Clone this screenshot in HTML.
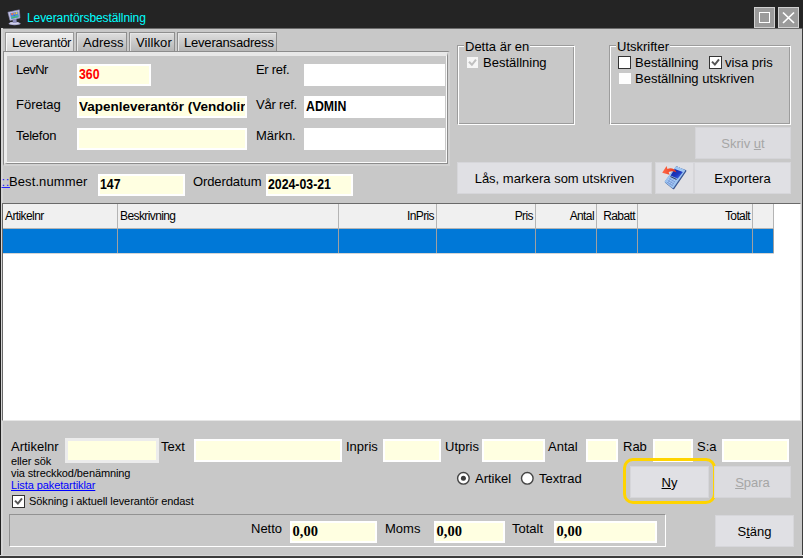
<!DOCTYPE html>
<html>
<head>
<meta charset="utf-8">
<title>Leverantörsbeställning</title>
<style>
html,body{margin:0;padding:0;}
body{width:803px;height:558px;overflow:hidden;background:#c8c8c8;font-family:"Liberation Sans",sans-serif;font-size:13px;color:#000;position:relative;}
.a{position:absolute;white-space:nowrap;}
.lbl{position:absolute;white-space:nowrap;font-size:13px;line-height:15px;color:#000;}
.sm{position:absolute;white-space:nowrap;font-size:11px;line-height:13px;color:#000;letter-spacing:-0.1px;}
.fld{position:absolute;box-sizing:border-box;border:2px solid #fff;background:#ffffe1;font-weight:bold;font-size:13px;letter-spacing:-0.2px;line-height:18px;padding-left:0;overflow:hidden;white-space:nowrap;}
.fld.w{background:#fff;}
.btn{position:absolute;box-sizing:border-box;background:#e0e0e4;border:1px solid #d6d6da;text-align:center;font-size:13px;color:#000;white-space:nowrap;}
.btn.dis{color:#a6a6a6;background:#dcdce0;border-color:#d4d4d8;}
.tab{position:absolute;box-sizing:border-box;top:32px;height:20px;border:1px solid #8e8e8e;font-size:13px;line-height:15px;padding:2px 0 0 6px;text-align:left;white-space:nowrap;overflow:hidden;background:linear-gradient(#dedede,#b6b6b6);box-shadow:inset 1px 1px 0 #e6e6e6;}
.tab.act{background:linear-gradient(#eeeeee,#d6d6d6);border-color:#989898;box-shadow:inset 1px 1px 0 #f6f6f6;}
.grp{position:absolute;box-sizing:border-box;border:1px solid #9c9c9c;}
.grp:after{content:"";position:absolute;left:0;top:0;right:-2px;bottom:-2px;border:1px solid #fff;border-right-color:#fff;}
.sunk{position:absolute;box-sizing:border-box;border:1px solid #929292;border-right-color:#fff;border-bottom-color:#fff;}
.cb{position:absolute;box-sizing:border-box;width:13px;height:13px;background:#fff;border:1px solid #333;}
.hd{position:absolute;top:204px;height:25px;box-sizing:border-box;background:#f0f0f0;border-right:1px solid #b4b4b4;font-size:12px;line-height:24px;letter-spacing:-0.6px;white-space:nowrap;overflow:hidden;}
.cell{position:absolute;top:229px;height:24px;box-sizing:border-box;background:#0078d7;border-right:1px solid #a0a0a0;}
.n{display:inline-block;font-size:15px;line-height:16px;letter-spacing:0;transform:scaleX(0.82);transform-origin:0 50%;}
u{text-decoration:underline;text-decoration-skip-ink:none;}
.lbl,.sm{text-decoration-skip-ink:none;}
</style>
</head>
<body>
<!-- title bar -->
<div class="a" id="titlebar" style="left:0;top:0;width:803px;height:28px;background:#242424;"></div>
<svg class="a" style="left:6px;top:8px" width="16" height="19" viewBox="6 8 16 19">
  <ellipse cx="14.6" cy="23.6" rx="6" ry="1.7" fill="#a4a4cc"/>
  <ellipse cx="14.4" cy="23.2" rx="4.6" ry="1.1" fill="#d0d0ea"/>
  <path d="M12.6 19.6 L16.4 18.8 L16.8 22.8 L12.8 23 Z" fill="#8c8cbc"/>
  <path d="M7.9 12.2 L19.3 9.8 L20 18 L10 20.5 Z" fill="#c4c4e6" stroke="#8484b0" stroke-width="0.6" stroke-linejoin="round"/>
  <path d="M10 13.2 L18.2 11.4 L18.7 17.2 L11.3 19 Z" fill="#5a84d4"/>
  <path d="M10.8 16.6 L18.6 14.8 L18.7 17.2 L11.3 19 Z" fill="#48b0b8"/>
  <rect x="11.3" y="13.2" width="1.7" height="1.8" fill="#f06a4a"/>
  <rect x="13.8" y="12.8" width="1.5" height="1.5" fill="#f0a030"/>
  <rect x="15.9" y="12.2" width="1.5" height="1.8" fill="#f0d040"/>
  <rect x="13.6" y="15" width="1.6" height="1.4" fill="#3a70d8"/>
  <rect x="12" y="16.8" width="5.6" height="0.9" fill="#58b848" transform="rotate(-12 14.8 17.2)"/>
</svg>
<div class="a" id="title" style="left:27px;top:10px;font-size:12px;line-height:16px;color:#00ffff;letter-spacing:-0.09px;">Leverantörsbeställning</div>
<div class="a" style="left:754px;top:7px;width:21px;height:21px;box-sizing:border-box;background:#9b9b9b;border:1px solid #d0d0d0;"></div>
<div class="a" style="left:759px;top:12px;width:11px;height:11px;box-sizing:border-box;border:1.5px solid #fff;"></div>
<div class="a" style="left:778px;top:7px;width:21px;height:21px;box-sizing:border-box;background:#9b9b9b;border:1px solid #d0d0d0;"></div>
<svg class="a" style="left:778px;top:7px" width="21" height="21"><path d="M5 5.5 L16 16 M16 5.5 L5 16" stroke="#fff" stroke-width="1.7"/></svg>

<div class="a" style="left:0;top:28px;width:803px;height:1px;background:#6c6c6c;"></div>
<!-- window borders -->
<div class="a" style="left:0;top:28px;width:1px;height:530px;background:#202020;"></div><div class="a" style="left:1px;top:28px;width:2px;height:527px;background:#d4d4d4;"></div><div class="a" style="left:802px;top:28px;width:1px;height:530px;background:#3c3c3c;"></div>

<!-- tabs -->
<div class="tab act" id="tab1" style="left:5px;width:69px;letter-spacing:-0.3px;">Leverantör</div>
<div class="tab" id="tab2" style="left:76px;width:51px;">Adress</div>
<div class="tab" id="tab3" style="left:129px;width:46px;letter-spacing:0.1px;">Villkor</div>
<div class="tab" id="tab4" style="left:177px;width:100px;letter-spacing:-0.2px;">Leveransadress</div>

<!-- panel -->
<div class="a" id="panel" style="left:3px;top:51px;width:447px;height:115px;box-sizing:border-box;border:solid;border-width:1px 2px 2px 1px;border-color:#8c8c8c #d2d2d2 #d2d2d2 #8c8c8c;"><div style="box-sizing:border-box;width:100%;height:100%;border:solid;border-width:4px 1px 1px 3px;border-color:#e8e8e8 #8c8c8c #8c8c8c #ececec;box-shadow:inset -1px -1px 0 #fafafa;"></div></div>

<div class="lbl" style="left:16px;top:62px;letter-spacing:-0.6px;">LevNr</div>
<div class="fld" id="f1" style="left:77px;top:64px;width:74px;height:22px;color:#f00;"><span class="n">360</span></div>
<div class="lbl" style="left:16px;top:97px;">Företag</div>
<div class="fld" id="f2" style="left:77px;top:96px;width:170px;height:22px;font-size:13.5px;letter-spacing:0;padding-left:0;">Vapenleverantör (Vendolir</div>
<div class="lbl" style="left:16px;top:128px;letter-spacing:-0.25px;">Telefon</div>
<div class="fld" id="f3" style="left:77px;top:128px;width:170px;height:22px;"></div>

<div class="lbl" style="left:256px;top:62px;letter-spacing:-0.3px;">Er ref.</div>
<div class="fld w" id="f4" style="left:304px;top:64px;width:141px;height:22px;"></div>
<div class="lbl" style="left:256px;top:97px;letter-spacing:-0.2px;">Vår ref.</div>
<div class="fld w" id="f5" style="left:304px;top:96px;width:141px;height:22px;"><span class="n">ADMIN</span></div>
<div class="lbl" style="left:256px;top:128px;">Märkn.</div>
<div class="fld w" id="f6" style="left:304px;top:128px;width:141px;height:22px;"></div>

<div class="lbl" style="left:1.5px;top:174px;color:#22f;text-decoration:underline;letter-spacing:0.6px;">::</div>
<div class="lbl" style="left:9px;top:174px;letter-spacing:0.1px;">Best.nummer</div>
<div class="fld" id="f7" style="left:98px;top:174px;width:87px;height:22px;"><span class="n">147</span></div>
<div class="lbl" style="left:193px;top:174px;letter-spacing:-0.1px;">Orderdatum</div>
<div class="fld" id="f8" style="left:266px;top:174px;width:87px;height:22px;"><span class="n">2024-03-21</span></div>

<!-- group Detta ar en -->
<div class="grp" id="g1" style="left:457px;top:45px;width:117px;height:79px;"></div>
<div class="lbl" style="left:464px;top:39px;background:#c8c8c8;padding:0 1px;">Detta är en</div>
<div class="a" style="left:467px;top:57px;width:11px;height:11px;background:#f6f6f6;"></div>
<svg class="a" style="left:466px;top:56px" width="13" height="13"><path d="M3 5.8 L5.9 8.8 L10 3.6" stroke="#c0c0c0" stroke-width="2" fill="none"/></svg>
<div class="lbl" style="left:483px;top:55px;">Beställning</div>

<!-- group Utskrifter -->
<div class="grp" id="g2" style="left:609px;top:45px;width:181px;height:79px;"></div>
<div class="lbl" style="left:616px;top:39px;background:#c8c8c8;padding:0 1px;">Utskrifter</div>
<div class="cb" style="left:618px;top:56px;"></div>
<div class="lbl" style="left:635px;top:55px;">Beställning</div>
<div class="cb" style="left:709px;top:56px;"></div>
<svg class="a" style="left:709px;top:56px" width="13" height="13"><path d="M3 5.6 L5.9 8.6 L10 3.4" stroke="#555" stroke-width="2" fill="none"/></svg>
<div class="lbl" style="left:725px;top:55px;">visa pris</div>
<div class="a" style="left:619px;top:73px;width:12px;height:11px;background:#fdfdfd;"></div>
<div class="lbl" style="left:635px;top:71px;">Beställning utskriven</div>

<!-- buttons -->
<div class="btn dis" id="b1" style="left:695px;top:127px;width:96px;height:32px;line-height:31px;">Skriv <u>u</u>t</div>
<div class="btn" id="b2" style="left:457px;top:162px;width:195px;height:32px;line-height:31px;">Lås, markera som utskriven</div>
<div class="btn" id="b3" style="left:655px;top:162px;width:39px;height:32px;"></div>
<svg class="a" style="left:655px;top:162px" width="39" height="32" viewBox="0 0 39 32">
  <defs>
    <linearGradient id="scr" x1="0" y1="0" x2="1" y2="1"><stop offset="0" stop-color="#10209c"/><stop offset="0.55" stop-color="#1c38c0"/><stop offset="1" stop-color="#5a80ec"/></linearGradient>
    <linearGradient id="arr" x1="0" y1="0" x2="1" y2="0"><stop offset="0" stop-color="#ff6a48"/><stop offset="1" stop-color="#e83418"/></linearGradient>
  </defs>
  <path d="M21.8 5.4 L30.3 8.9 L18.5 26.1 L10.9 19.9 Z" fill="#3a5590" stroke="#3a5590" stroke-width="2.2" stroke-linejoin="round"/>
  <path d="M21.3 5.3 L29.3 8.6 L17.8 25.2 L10.6 19.5 Z" fill="#a8ccf6" stroke="#9cc4f2" stroke-width="1.8" stroke-linejoin="round"/>
  <path d="M19.7 7.1 L27.9 10 L22.7 16.8 L15.6 13.5 Z" fill="url(#scr)"/>
  <path d="M15.4 14.6 L21.6 17.6" stroke="#30406c" stroke-width="1.1" fill="none"/>
  <path d="M14 16.6 L20 19.9 M12.8 18.4 L18.8 21.8 M11.8 20 L17.8 23.6" stroke="#7494d4" stroke-width="0.9" fill="none"/>
  <path d="M16.2 16 L12.6 21 M18.4 17.2 L14.8 22.6 M20.4 18.4 L16.8 24" stroke="#7c9cd8" stroke-width="0.7" fill="none"/>
  <path d="M23 4.9 L27.4 6.6" stroke="#e4f0ff" stroke-width="0.9" stroke-dasharray="1 1"/>
  <path d="M7.2 10.8 L11.6 4 L12.4 7 C16 5.4 19.6 6.8 21.6 10.4 C18.8 9 16.2 9 13.6 10 L14.6 12.8 Z" fill="url(#arr)"/>
</svg>
<div class="btn" id="b4" style="left:694px;top:162px;width:97px;height:32px;line-height:31px;">Exportera</div>

<!-- grid -->
<div class="a" id="grid" style="left:2px;top:203px;width:799px;height:218px;background:#fff;border-top:1px solid #6a6a6a;border-left:1px solid #6a6a6a;border-right:1px solid #e6e6e6;border-bottom:1px solid #e6e6e6;box-sizing:border-box;"></div>
<div class="hd" style="left:3px;width:115px;padding-left:2px;">Artikelnr</div>
<div class="hd" style="left:118px;width:221px;padding-left:2px;">Beskrivning</div>
<div class="hd" style="left:339px;width:98px;text-align:right;padding-right:2px;">InPris</div>
<div class="hd" style="left:437px;width:99px;text-align:right;padding-right:2px;">Pris</div>
<div class="hd" style="left:536px;width:61px;text-align:right;padding-right:2px;">Antal</div>
<div class="hd" style="left:597px;width:41px;text-align:right;padding-right:2px;">Rabatt</div>
<div class="hd" style="left:638px;width:115px;text-align:right;padding-right:2px;">Totalt</div>
<div class="hd" style="left:753px;width:21px;"></div>
<div class="a" style="left:3px;top:228px;width:771px;height:1px;background:#b4b4b4;"></div>
<div class="a" style="left:3px;top:253px;width:771px;height:1px;background:#d4d4d4;"></div>
<div class="cell" style="left:3px;width:115px;"></div>
<div class="cell" style="left:118px;width:221px;"></div>
<div class="cell" style="left:339px;width:98px;"></div>
<div class="cell" style="left:437px;width:99px;"></div>
<div class="cell" style="left:536px;width:61px;"></div>
<div class="cell" style="left:597px;width:41px;"></div>
<div class="cell" style="left:638px;width:115px;"></div>
<div class="cell" style="left:753px;width:21px;"></div>

<!-- bottom entry row -->
<div class="lbl" style="left:11px;top:439px;">Artikelnr</div>
<div class="fld" id="e1" style="left:65px;top:438px;width:94px;height:25px;border:3px solid #ececec;"></div>
<div class="lbl" style="left:161px;top:439px;">Text</div>
<div class="fld" id="e2" style="left:194px;top:439px;width:148px;height:23px;"></div>
<div class="lbl" style="left:346px;top:439px;">Inpris</div>
<div class="fld" id="e3" style="left:383px;top:439px;width:58px;height:23px;"></div>
<div class="lbl" style="left:445px;top:439px;">Utpris</div>
<div class="fld" id="e4" style="left:482px;top:439px;width:63px;height:23px;"></div>
<div class="lbl" style="left:548px;top:439px;">Antal</div>
<div class="fld" id="e5" style="left:586px;top:439px;width:32px;height:23px;"></div>
<div class="lbl" style="left:623px;top:439px;">Rab</div>
<div class="fld" id="e6" style="left:653px;top:439px;width:40px;height:23px;"></div>
<div class="lbl" style="left:697px;top:439px;">S:a</div>
<div class="fld" id="e7" style="left:722px;top:439px;width:67px;height:23px;"></div>

<div class="sm" style="left:11px;top:455px;">eller sök</div>
<div class="sm" style="left:11px;top:467px;">via streckkod/benämning</div>
<div class="sm" style="left:11px;top:479px;color:#00f;text-decoration:underline;">Lista paketartiklar</div>
<div class="cb" style="left:12px;top:495px;"></div>
<svg class="a" style="left:12px;top:495px" width="13" height="13"><path d="M3 5.6 L5.9 8.6 L10 3.4" stroke="#555" stroke-width="2" fill="none"/></svg>
<div class="sm" style="left:29px;top:495px;">Sökning i aktuell leverantör endast</div>

<!-- radios -->
<svg class="a" style="left:456px;top:471px" width="15" height="15"><circle cx="7.4" cy="7.3" r="5.8" fill="#fff" stroke="#444" stroke-width="1.4"/><circle cx="7.4" cy="7.3" r="2.5" fill="#3c3c3c"/></svg>
<div class="lbl" style="left:475px;top:471px;">Artikel</div>
<svg class="a" style="left:520px;top:471px" width="15" height="15"><circle cx="7.3" cy="7.3" r="5.8" fill="#fff" stroke="#444" stroke-width="1.4"/></svg>
<div class="lbl" style="left:539px;top:471px;">Textrad</div>

<!-- Ny / Spara / Stäng -->
<div class="a" id="hl" style="left:623px;top:458px;width:93px;height:46px;box-sizing:border-box;border:3px solid #ffd400;border-radius:10px;"></div>
<div class="btn" id="b5" style="left:630px;top:466px;width:79px;height:32px;line-height:32px;"><u>N</u>y</div>
<div class="btn dis" id="b6" style="left:714px;top:466px;width:77px;height:32px;line-height:32px;"><u>S</u>para</div>
<div class="btn" id="b7" style="left:715px;top:515px;width:79px;height:32px;line-height:32px;">S<u>t</u>äng</div>

<!-- totals panel -->
<div class="sunk" id="g3" style="left:9px;top:514px;width:657px;height:33px;"></div>
<div class="lbl" style="left:251px;top:521px;">Netto</div>
<div class="fld" id="t1" style="left:290px;top:521px;width:87px;height:22px;line-height:17px;padding-left:0.5px;letter-spacing:0;font-family:'Liberation Serif',serif;font-size:14.5px;">0,00</div>
<div class="lbl" style="left:385px;top:521px;">Moms</div>
<div class="fld" id="t2" style="left:434px;top:521px;width:71px;height:22px;line-height:17px;padding-left:0.5px;letter-spacing:0;font-family:'Liberation Serif',serif;font-size:14.5px;">0,00</div>
<div class="lbl" style="left:512px;top:521px;">Totalt</div>
<div class="fld" id="t3" style="left:554px;top:521px;width:103px;height:22px;line-height:17px;padding-left:0.5px;letter-spacing:0;font-family:'Liberation Serif',serif;font-size:14.5px;">0,00</div>

<!-- bottom border -->
<div class="a" style="left:0;top:555px;width:803px;height:1px;background:#d6d6d6;"></div><div class="a" style="left:0;top:556px;width:803px;height:2px;background:#3c3c3c;"></div>
</body>
</html>
